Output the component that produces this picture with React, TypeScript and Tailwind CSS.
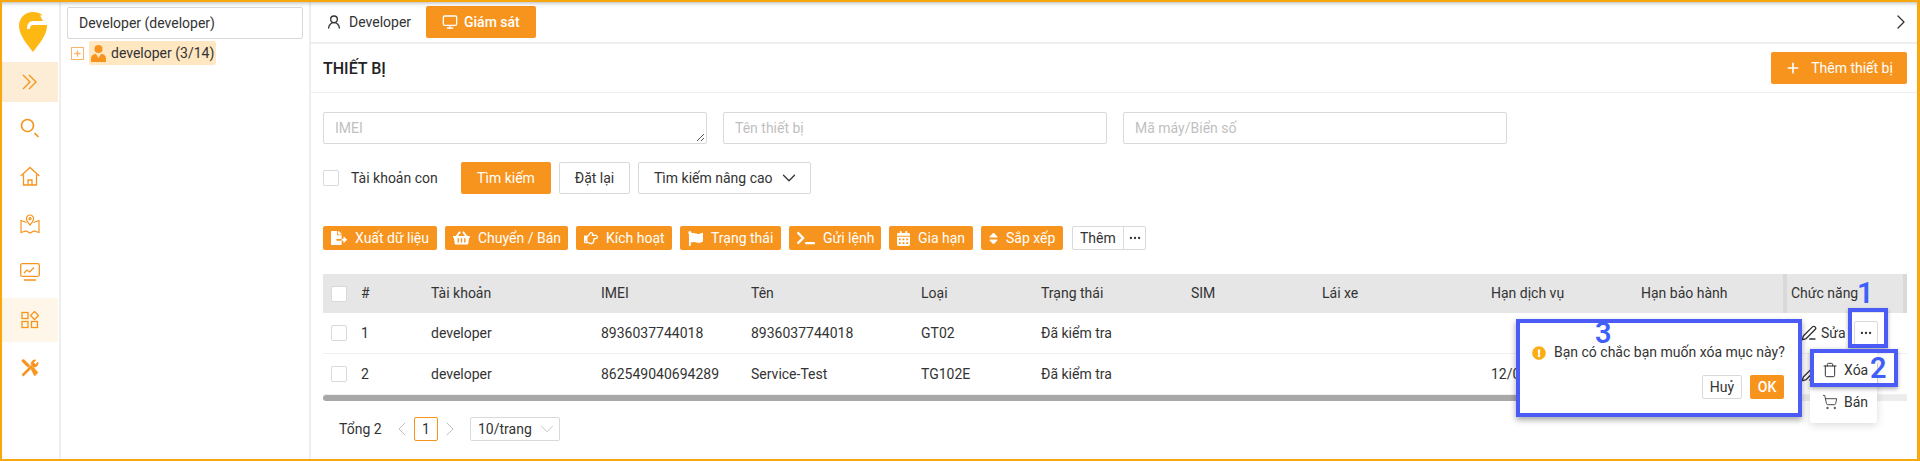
import { ChevronDown, ChevronLeft, ChevronRight, Ellipsis, Monitor, PenLine, Plus, ShoppingCart, Trash, UserRound } from 'lucide-react'
import { FaCalendarAlt, FaExclamationCircle, FaFileExport, FaFlag, FaRegHandPointRight, FaShoppingBasket, FaSort, FaTerminal } from 'react-icons/fa'

const actions = [
  { label: 'Xuất dữ liệu', w: 'w-[114px]', icon: <FaFileExport size={16} className="w-[16px]" /> },
  { label: 'Chuyển / Bán', w: 'w-[123px]', icon: <FaShoppingBasket size={16} className="w-[17px]" /> },
  { label: 'Kích hoạt', w: 'w-[96px]', icon: <FaRegHandPointRight size={16} className="w-[14px]" /> },
  { label: 'Trạng thái', w: 'w-[101px]', icon: <FaFlag size={15} className="w-[15px]" /> },
  { label: 'Gửi lệnh', w: 'w-[92px]', icon: <FaTerminal size={16} className="w-[18px]" /> },
  { label: 'Gia hạn', w: 'w-[84px]', icon: <FaCalendarAlt size={15} className="w-[13px]" /> },
  { label: 'Sắp xếp', w: 'w-[82px]', icon: <FaSort size={15} className="w-[9px]" /> },
]

const rows = [
  { id: 1, account: 'developer', imei: '8936037744018', name: '8936037744018', type: 'GT02', status: 'Đã kiểm tra', service: '' },
  { id: 2, account: 'developer', imei: '862549040694289', name: 'Service-Test', type: 'TG102E', status: 'Đã kiểm tra', service: '12/0' },
]

const cols = 'grid grid-cols-[38px_70px_170px_150px_170px_120px_150px_131px_169px_150px_142px_1fr] items-center'

function Box() {
  return <span className="block h-4 w-4 rounded-[2px] border border-[#d9d9d9] bg-white" />
}

function SideIcon({ children, bg = '', h = 'h-[48px]' }: { children: React.ReactNode; bg?: string; h?: string }) {
  return <div className={`flex w-[56px] items-center justify-center ${h} ${bg}`}>{children}</div>
}

export default function App() {
  return (
    <div className="relative flex h-[461px] w-[1920px] overflow-hidden border-2 border-r-[3px] border-[#f7a80f] bg-white font-['Roboto',sans-serif] text-[14px] text-[#333]">
      <aside className="flex w-[57px] shrink-0 flex-col">
        <div className="flex h-[60px] items-start justify-center pl-[4px] pt-[10px]">
          <svg width="28" height="40" viewBox="0 0 28 40">
            <path d="M14 0C6 0 0 6 0 14c0 9 8 18 14 26 6-8 14-17 14-26 0-5-2-9-6-12-2-1.300-5-2-8-2z" fill="#fdb813" />
            <path d="M21 3.500L28 3v10H14c-2 0-3 1.500-3 4H8c0-5 2-8 6-8h10z" fill="#fff" />
          </svg>
        </div>
        <SideIcon bg="bg-[#fdecd6]" h="h-[40px]">
          <svg width="16" height="16" viewBox="0 0 16 16" fill="none" stroke="#f7941d" strokeWidth="1.400">
            <path d="M1 1l7 7-7 7M7 1l7 7-7 7" />
          </svg>
        </SideIcon>
        <div className="h-[2px]" />
        <SideIcon>
          <svg width="20" height="20" viewBox="0 0 20 20" fill="none" stroke="#f7941d" strokeWidth="1.700">
            <circle cx="7.500" cy="7.500" r="6" />
            <path d="M14.500 15l4 4" />
          </svg>
        </SideIcon>
        <SideIcon>
          <svg width="20" height="20" viewBox="0 0 20 20" fill="none" stroke="#f7941d" strokeWidth="1.300">
            <path d="M0.700 10l9.300-8.500 9.300 8.500M3.500 8.500V19h13V8.500M8 19v-5h4v5" />
          </svg>
        </SideIcon>
        <SideIcon>
          <svg width="20" height="20" viewBox="0 0 20 20" fill="none" stroke="#f7941d" strokeWidth="1.200">
            <path d="M10 1a3.600 3.600 0 0 0-3.600 3.600C6.400 7 10 11 10 11s3.600-4 3.600-6.400A3.600 3.600 0 0 0 10 1zM6.500 8.500L1 6.500v12l5-1.500 4 2 4-2 5 1.500v-12l-5.500 2" />
            <circle cx="10" cy="4.700" r="1" />
          </svg>
        </SideIcon>
        <SideIcon>
          <svg width="20" height="18" viewBox="0 0 20 18" fill="none" stroke="#f7941d" strokeWidth="1.300">
            <rect x="0.700" y="0.700" width="18.600" height="12.600" rx="1.500" />
            <path d="M4 10l3-3 2.500 2L14 4.500M4 17h12" />
          </svg>
        </SideIcon>
        <div className="h-[2px]" />
        <SideIcon bg="bg-[#fef6e8]" h="h-[44px]">
          <svg width="18" height="18" viewBox="0 0 18 18" fill="none" stroke="#f7941d" strokeWidth="1.300">
            <rect x="1" y="1.500" width="6" height="6" />
            <rect x="1" y="10.500" width="6" height="6" />
            <rect x="10.500" y="10.500" width="6" height="6" />
            <path d="M13.500 0.500l4 4-4 4-4-4z" />
          </svg>
        </SideIcon>
        <div className="h-[2px]" />
        <SideIcon>
          <svg width="18" height="18" viewBox="0 0 18 18" fill="#f7941d" stroke="#f7941d">
            <path d="M1 1l2-0.500 6 6-2 2-6-6z" strokeWidth="0.500" />
            <path d="M10 10l2-2 5 5.500-3.500 3.500z" strokeWidth="0.500" />
            <path d="M1.500 16.500L11 7" fill="none" strokeWidth="2.500" />
            <path d="M10 5a4 4 0 0 1 5-4l-2.500 2.500 2 2L17 3a4 4 0 0 1-5 5z" strokeWidth="0.500" />
          </svg>
        </SideIcon>
      </aside>

      <div className="w-[2px] shrink-0 bg-[#eee]" />

      <section className="flex w-[248px] shrink-0 flex-col px-[6px] pt-[5px]">
        <div className="flex h-[32px] items-center rounded-[2px] border border-[#d9d9d9] px-[11px]">Developer (developer)</div>
        <div className="mt-[2px] flex h-[24px] items-center">
          <span className="ml-[4px] flex h-[13px] w-[13px] items-center justify-center border border-[#f9b66b]">
            <Plus size={9} strokeWidth={3.500} className="text-[#f9b66b]" />
          </span>
          <span className="ml-[5px] flex h-[24px] w-[127px] items-center gap-[5px] rounded-[2px] bg-[#ffe7c2] pl-[2px]">
            <svg width="15" height="17" viewBox="0 0 15 17" fill="#f7941d">
              <circle cx="7.500" cy="4" r="4" />
              <path d="M0 17v-3.500C0 11 2 9 5 9l2.500 4L10 9c3 0 5 2 5 4.500V17z" />
            </svg>
            <span>developer (3/14)</span>
          </span>
        </div>
      </section>

      <div className="w-[2px] shrink-0 bg-[#eee]" />

      <main className="flex min-w-0 flex-1 flex-col">
        <div className="flex h-[42px] shrink-0 items-start justify-between border-b-2 border-[#eee]">
          <div className="flex pt-[4px]">
            <div className="flex h-[32px] w-[115px] items-center gap-[7px] pl-[15px]">
              <UserRound size={16} />
              <span>Developer</span>
            </div>
            <div className="flex h-[32px] w-[110px] items-center gap-[6px] rounded-[2px] bg-[#f7941d] pl-[16px] font-medium text-white">
              <Monitor size={16} />
              <span>Giám sát</span>
            </div>
          </div>
          <ChevronRight size={24} strokeWidth={1.300} className="mr-[4px] mt-[8px]" />
        </div>

        <div className="flex h-[49px] shrink-0 items-center justify-between border-b border-[#eee] pl-[12px] pr-[10px]">
          <h1 className="pt-[2px] text-[16px] font-medium text-[#222]">THIẾT BỊ</h1>
          <button className="flex h-[32px] w-[136px] items-center justify-center gap-[10px] rounded-[2px] bg-[#f7941d] text-white">
            <Plus size={16} strokeWidth={2.500} />
            Thêm thiết bị
          </button>
        </div>

        <div className="flex gap-[16px] pl-[12px] pt-[19px]">
          <div className="relative h-[32px] w-[384px] rounded-[2px] border border-[#d9d9d9] px-[11px] py-[5px] text-[#bfbfbf]">
            IMEI
            <svg className="absolute bottom-[1px] right-[1px]" width="9" height="9" viewBox="0 0 9 9" stroke="#555" strokeWidth="1">
              <path d="M1 8l7-7M5 8l3-3" />
            </svg>
          </div>
          <div className="h-[32px] w-[384px] rounded-[2px] border border-[#d9d9d9] px-[11px] py-[5px] text-[#bfbfbf]">Tên thiết bị</div>
          <div className="h-[32px] w-[384px] rounded-[2px] border border-[#d9d9d9] px-[11px] py-[5px] text-[#bfbfbf]">Mã máy/Biển số</div>
        </div>

        <div className="flex items-center pl-[12px] pt-[18px]">
          <Box />
          <span className="ml-[12px] w-[86px] whitespace-nowrap">Tài khoản con</span>
          <button className="ml-[24px] h-[32px] w-[90px] rounded-[2px] bg-[#f7941d] text-white">Tìm kiếm</button>
          <button className="ml-[8px] h-[32px] w-[71px] rounded-[2px] border border-[#d9d9d9]">Đặt lại</button>
          <button className="ml-[8px] flex h-[32px] w-[173px] items-center gap-[5px] rounded-[2px] border border-[#d9d9d9] pl-[15px]">
            Tìm kiếm nâng cao
            <ChevronDown size={22} strokeWidth={1.400} />
          </button>
        </div>

        <div className="flex items-center gap-[8px] pl-[12px] pt-[32px]">
          {actions.map((a) => (
            <button key={a.label} className={`flex h-[24px] items-center gap-[8px] rounded-[2px] bg-[#f7941d] pl-[8px] text-white ${a.w}`}>
              {a.icon}
              {a.label}
            </button>
          ))}
          <div className="ml-[1px] flex h-[24px] w-[74px] items-center rounded-[2px] border border-[#d9d9d9]">
            <span className="w-[50px] pl-[7px]">Thêm</span>
            <span className="flex h-full flex-1 items-center justify-center border-l border-[#d9d9d9]">
              <Ellipsis size={14} />
            </span>
          </div>
        </div>

        <div className="ml-[12px] mr-[10px] mt-[24px]">
          <div className={`${cols} h-[39px] bg-[#e6e6e6]`}>
            <span className="pl-[8px]"><Box /></span>
            <span>#</span>
            <span>Tài khoản</span>
            <span>IMEI</span>
            <span>Tên</span>
            <span>Loại</span>
            <span>Trạng thái</span>
            <span>SIM</span>
            <span>Lái xe</span>
            <span>Hạn dịch vụ</span>
            <span>Hạn bảo hành</span>
            <span className="flex h-full items-center border-x-4 border-[#d9d9d9] pl-[4px]">Chức năng</span>
          </div>
          {rows.map((r) => (
            <div key={r.id} className={`${cols} h-[41px] border-b border-[#f0f0f0]`}>
              <span className="pl-[8px]"><Box /></span>
              <span>{r.id}</span>
              <span>{r.account}</span>
              <span>{r.imei}</span>
              <span>{r.name}</span>
              <span>{r.type}</span>
              <span>{r.status}</span>
              <span />
              <span />
              <span>{r.service}</span>
              <span />
              <span className="flex items-center pl-[18px]">
                <PenLine size={16} />
                <span className="ml-[4px]">Sửa</span>
                <span className="ml-[8px] flex h-[24px] w-[24px] items-center justify-center rounded-[2px] border border-[#d9d9d9]">
                  <Ellipsis size={14} />
                </span>
              </span>
            </div>
          ))}
          <div className="flex h-[6px]">
            <div className="w-[1460px] rounded-[3px] bg-[#a8a8a8]" />
            <div className="flex-1 bg-[#ececec]" />
          </div>
        </div>

        <div className="flex items-center pl-[28px] pt-[16px]">
          <span className="w-[42px] whitespace-nowrap">Tổng 2</span>
          <ChevronLeft size={24} strokeWidth={1} className="ml-[9px] text-[#bfbfbf]" />
          <span className="flex h-[24px] w-[24px] items-center justify-center rounded-[2px] border border-[#f7941d]">1</span>
          <ChevronRight size={24} strokeWidth={1} className="text-[#bfbfbf]" />
          <span className="ml-[8px] flex h-[24px] w-[90px] items-center justify-between rounded-[2px] border border-[#d9d9d9] pl-[7px] pr-[1px]">
            10/trang
            <ChevronDown size={22} strokeWidth={1} className="text-[#bfbfbf]" />
          </span>
        </div>

        <div className="absolute left-[1808px] top-[347px] h-[74px] w-[67px] rounded-[2px] bg-white py-[5px] shadow-[0_2px_8px_rgba(0,0,0,0.15)]">
          <div className="flex h-[32px] items-center gap-[6px] pl-[12px]"><Trash size={16} strokeWidth={1.500} />Xóa</div>
          <div className="flex h-[32px] items-center gap-[6px] pl-[12px]"><ShoppingCart size={16} strokeWidth={1.300} />Bán</div>
        </div>
        <div className="absolute left-[1514px] top-[317px] h-[98px] w-[286px] border-4 border-[#4a5cf5] bg-white shadow-[0_3px_6px_rgba(0,0,0,0.35)]">
          <div className="flex items-center gap-[8px] pl-[12px] pt-[19px]">
            <FaExclamationCircle size={14} className="text-[#faad14]" />
            Bạn có chắc bạn muốn xóa mục này?
          </div>
          <div className="flex justify-end gap-[8px] pr-[14px] pt-[12px]">
            <button className="h-[24px] w-[40px] rounded-[2px] border border-[#d9d9d9]">Huỷ</button>
            <button className="h-[24px] w-[34px] rounded-[2px] bg-[#f7941d] font-medium text-white">OK</button>
          </div>
        </div>
        <div className="absolute left-[1846px] top-[306px] h-[40px] w-[40px] border-4 border-[#4a5cf5] shadow-[0_2px_4px_rgba(0,0,0,0.3)]" />
        <div className="absolute left-[1808px] top-[347px] h-[38px] w-[88px] border-4 border-[#4a5cf5] shadow-[0_2px_4px_rgba(0,0,0,0.3)]" />
        <span className="absolute left-[1855px] top-[277px] text-[29px] font-semibold leading-none text-[#3f5ffa]">1</span>
        <span className="absolute left-[1868px] top-[352px] text-[29px] font-semibold leading-none text-[#3f5ffa]">2</span>
        <span className="absolute left-[1593px] top-[317px] text-[29px] font-semibold leading-none text-[#3f5ffa]">3</span>
      </main>
      <div className="pointer-events-none absolute inset-0 shadow-[inset_0_4px_4px_-3px_rgba(0,0,0,0.3)]" />
    </div>
  )
}
